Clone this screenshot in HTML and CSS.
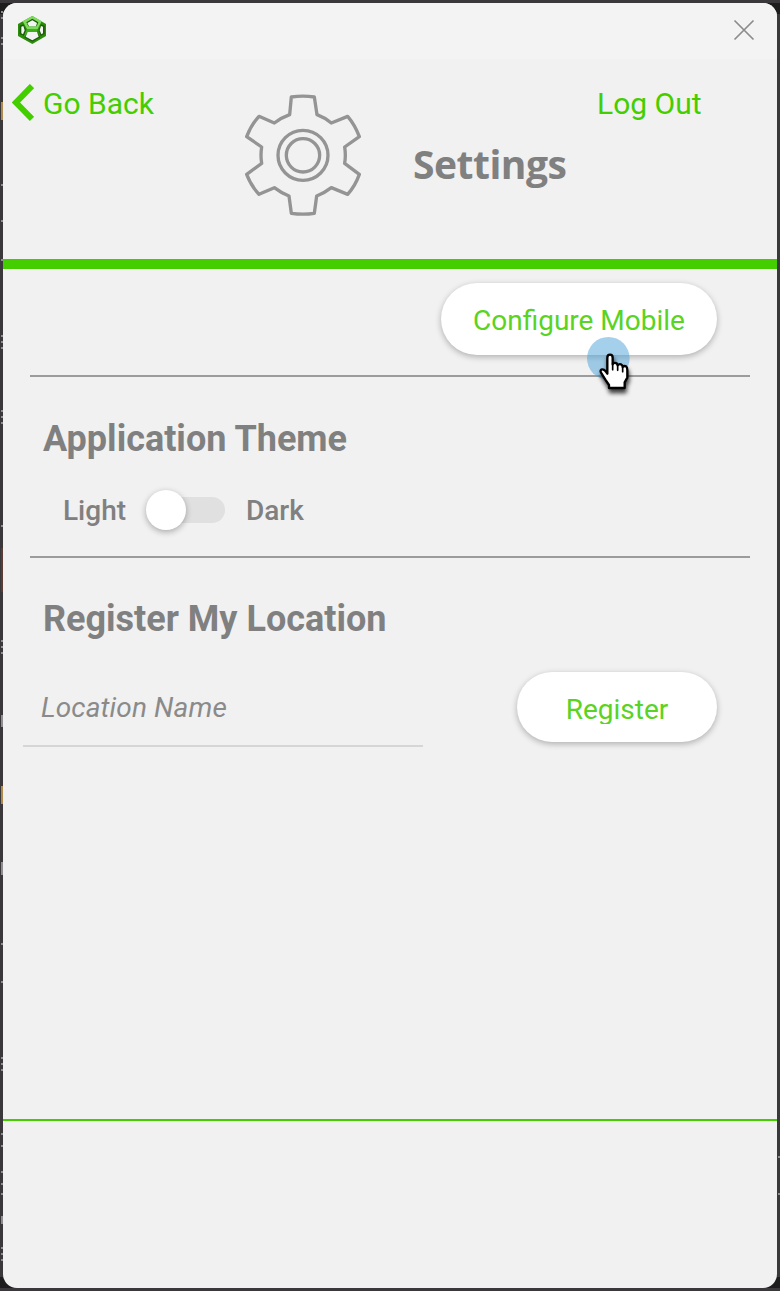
FILE: index.html
```html
<!DOCTYPE html>
<html lang="en">
<head>
<meta charset="utf-8">
<title>Settings</title>
<link rel="stylesheet" href="styles.css">
</head>
<body>
<svg class="backdrop" width="780" height="1291" viewBox="0 0 780 1291" aria-hidden="true">
  <path fill="#1d1d1e" d="M0 0h14v14H0zM766 0h14v14h-14zM0 1277h14v14H0zM766 1277h14v14h-14z"/>
  <path fill="#3a383a" d="M0 0h780v3H0zM0 1288h780v3H0z"/>
  <path stroke="#8d8d92" stroke-width="2" stroke-dasharray="2 4" d="M2 11v12M2 37v9M2 335v18M2 410v15M2 640v14M2 1057v14M2 1247v14"/>
  <path fill="#8d8d92" d="M1 184h2v2H1zM1 220h2v2H1zM1 259h2v2H1zM1 525h2v2H1zM1 715h2v12H1zM1 862h2v13H1zM1 943h2v2H1zM1 981h2v2H1zM1 1133h2v2H1zM1 1145h2v2H1zM1 1171h2v2H1zM1 1183h2v2H1zM1 1193h2v2H1zM1 1216h2v8H1zM778 1156h2v2h-2zM778 1193h2v2h-2z"/>
  <path fill="#b08a4a" d="M1 102h2v18H1zM1 786h2v18H1z"/>
  <path fill="#5c3a36" d="M1 548h2v44H1z"/>
</svg>
<div class="window">
  <header class="titlebar">
    <svg class="logo" width="30" height="30" viewBox="0 0 90 90">
      <path fill="#2c8d0b" d="M46 3 87 27V63L46 87 3 63V27z"/>
      <path fill="#7ddb5c" d="M46 3 74 19 62 42H30L17 19z"/>
      <path fill="#3fae1c" d="M30 42H62L60 51H32L26 65 20 62z"/>
      <path fill="#1d5c0a" d="M46 11 64 22 59 34H34L28 22zM8 32 19 28 27 44 21 63 8 57zM83 32 72 28 65 44 71 63 83 57zM32 53H60L70 67 46 80 22 67z"/>
      <path fill="#f3f3f3" d="M46 16 60 24 57 34H36L31 24zM13 35 19 33 23 46 18 58 13 55zM78 35 72 33 68 46 73 58 78 55zM32 51H60L65 65 46 76 26 65z"/>
    </svg>
    <svg class="close" width="22" height="22" viewBox="0 0 22 22"><path d="M1.5 1.5l19 19M20.500 1.500l-19 19"/></svg>
  </header>
  <div class="header">
    <a class="back"><svg width="22" height="38" viewBox="0 0 22 38"><path d="M20 2 4 18.500 20 35"/></svg><span>Go Back</span></a>
    <svg class="gear" width="150" height="150" viewBox="0 0 450 450">
      <path d="M184 51Q219 46 253 51L261 104Q285 113 304 129L353 109Q375 135 388 170L344 201Q348 226 344 250L388 283Q376 317 353 343L304 323Q285 338 260 348L253 400Q219 405 184 400L177 348Q152 338 133 323L87 343Q63 317 50 283L95 250Q91 226 95 201L50 170Q63 135 87 109L133 129Q154 113 179 104Z"/>
      <circle cx="219" cy="226" r="75"/><circle cx="219" cy="226" r="50"/>
    </svg>
    <h1>Settings</h1>
    <a class="logout">Log Out</a>
  </div>
  <main>
    <section class="mobile"><button class="pill configure">Configure Mobile</button></section>
    <section class="theme">
      <h2>Application Theme</h2>
      <div class="switch-row"><span class="light">Light</span><span class="switch"><i class="knob"></i></span><span>Dark</span></div>
    </section>
    <section class="location">
      <h2>Register My Location</h2>
      <div class="form"><div class="field">Location Name</div><button class="pill register"><span>Register</span></button></div>
    </section>
  </main>
  <footer></footer>
</div>
<svg class="pointer" width="90" height="80" viewBox="0 0 270 240">
  <circle class="halo" cx="145" cy="100" r="64"/>
  <path class="hand" d="M142 98Q142 89 150 89Q158 89 158 98V118Q161 112 167 114Q172 115 173 121Q177 116 183 118Q188 120 188 126Q193 121 198 124Q202 127 202 135V158L194 172V189H147V180L136 164L123 143Q120 137 124 134Q130 131 137 139L142 146Z"/>
  <path class="fingers" d="M158 116V134M173 120V136M188 126V140"/>
</svg>
</body>
</html>
```
FILE: styles.css
```css
* { box-sizing: border-box; }
body {
  margin: 0;
  height: 1291px;
  padding: 3px;
  overflow: hidden;
  background: #3a383a;
  color: #808080;
  font-family: Roboto, "Liberation Sans", sans-serif;
}
.backdrop { position: absolute; left: 0; top: 0; }
.window {
  position: relative;
  width: 774px;
  height: 1285px;
  display: flex;
  flex-direction: column;
  overflow: hidden;
  border-radius: 14px;
  background: #f1f1f1;
}
.titlebar {
  height: 56px;
  display: flex;
  justify-content: space-between;
  align-items: flex-start;
  padding: 12px 22px 0 14px;
  background: #f3f3f3;
}
.close { margin-top: 4px; fill: none; stroke: #8c8c8c; stroke-width: 1.7; }
.header {
  height: 210px;
  display: flex;
  align-items: flex-start;
  border-bottom: 10px solid #44ce00;
}
.back { width: 227px; display: flex; padding: 25px 0 0 9px; }
.back svg { fill: none; stroke: #44ce00; stroke-width: 6; }
.back span { margin: 1px 0 0 9px; }
.back, .logout { color: #44ce00; font-size: 30px; line-height: 38px; white-space: nowrap; }
.gear { margin-top: 21px; fill: none; stroke: #949494; stroke-width: 10; stroke-linejoin: round; }
h1 {
  width: 184px;
  margin: 79px 0 0 33px;
  font: bold 39px/52px "Open Sans", "Noto Sans", sans-serif;
  letter-spacing: -.5px;
}
.logout { padding-top: 26px; }
section { width: 720px; margin-left: 27px; }
.mobile { height: 108px; padding: 14px 33px 0 0; display: flex; justify-content: flex-end; border-bottom: 2px solid #9c9c9c; }
.theme { height: 181px; border-bottom: 2px solid #9c9c9c; }
h2 { margin: 0; padding: 40px 0 0 13px; font-size: 36px; line-height: 44px; font-weight: bold; }
.location h2 { padding-top: 39px; }
.pill {
  height: 72px;
  border: 0;
  padding: 3px 0 0;
  border-radius: 40px;
  background: #fff;
  color: #5ad322;
  font: 28px/36px Roboto, sans-serif;
  box-shadow: 0 2px 6px rgba(0,0,0,.28);
}
.configure { width: 276px; }
.register { width: 200px; height: 70px; padding-top: 3px; }
.register span { display: block; height: 31px; overflow: hidden; line-height: 33px; }
.switch-row { height: 40px; display: flex; align-items: center; margin-top: 29px; padding-left: 33px; font-size: 28px; font-weight: 500; }
.light { width: 84px; }
.switch { width: 78px; height: 26px; margin-right: 21px; border-radius: 13px; background: #e0e0e0; display: flex; align-items: center; }
.knob { width: 40px; height: 40px; flex: none; margin-left: -1px; border-radius: 50%; background: #fff; box-shadow: 0 2px 6px rgba(0,0,0,.3); }
.form { display: flex; justify-content: space-between; margin: 31px 33px 0 -7px; }
.field { width: 400px; height: 75px; padding: 17px 18px 0; font-size: 28px; line-height: 38px; font-style: italic; letter-spacing: .12px; color: #8a8a8a; border-bottom: 2px solid #d6d6d6; }
main { flex: 1; }
footer { height: 169px; border-top: 2px solid #44ce00; }
.pointer { position: absolute; left: 560px; top: 325px; overflow: visible; }
.halo { fill: rgba(74,162,218,.5); }
.hand { fill: #fff; stroke: #000; stroke-width: 7; stroke-linejoin: round; filter: drop-shadow(3px 12px 7px rgba(0,0,0,.75)); }
.fingers { fill: none; stroke: #000; stroke-width: 5; stroke-linecap: round; }
```
